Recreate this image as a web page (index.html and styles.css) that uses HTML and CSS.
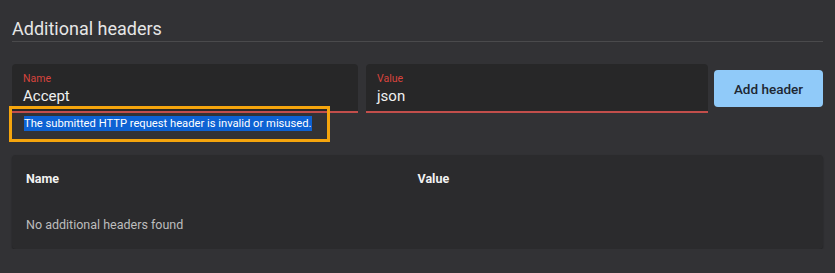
FILE: index.html
```html
<!DOCTYPE html>
<html>
<head>
<meta charset="utf-8">
<link rel="stylesheet" href="styles.css">
</head>
<body>
<section class="panel">
  <h2 class="title">Additional headers</h2>
  <div class="form-row">
    <div class="field-col">
      <div class="field error">
        <label class="field-label">Name</label>
        <div class="field-value">Accept</div>
      </div>
      <div class="helper"><span class="selected">The submitted HTTP request header is invalid or misused.</span></div>
      <div class="annotation"></div>
    </div>
    <div class="field-col">
      <div class="field error">
        <label class="field-label">Value</label>
        <div class="field-value">json</div>
      </div>
    </div>
    <button class="add-btn">Add header</button>
  </div>
  <div class="card">
    <div class="table-row head">
      <div class="cell">Name</div>
      <div class="cell">Value</div>
    </div>
    <div class="table-row empty">
      <div class="cell">No additional headers found</div>
    </div>
  </div>
</section>
</body>
</html>
```

FILE: styles.css
```css
html, body {
  margin: 0;
  padding: 0;
  background: #323235;
  font-family: Roboto, "Noto Sans", Arial, sans-serif;
}
.panel {
  padding: 17px 12px 0 12px;
}
.title {
  margin: 0;
  font-size: 18px;
  line-height: 24px;
  font-weight: 400;
  color: #e6e6e6;
  border-bottom: 1px solid #4a4a4c;
}
.form-row {
  display: grid;
  grid-template-columns: 346px 342px 109px;
  column-gap: 8px;
  align-items: start;
  margin-top: 22px;
}
.form-row .add-btn {
  margin-left: -2px;
}
.field-col {
  position: relative;
}
.field {
  background: #272728;
  border-radius: 4px 4px 0 0;
  height: 49px;
  padding: 0 11px;
  box-sizing: border-box;
  border-bottom: 2px solid #c24e4b;
  display: flex;
  flex-direction: column;
}
.field-label {
  margin-top: 9px;
  font-size: 10.5px;
  line-height: 12px;
  color: #d8443d;
}
.field-value {
  margin-top: 2px;
  font-size: 15px;
  line-height: 18px;
  color: #f0f0f0;
}
.helper {
  margin-top: 2px;
  padding-left: 12px;
  font-size: 11.2px;
  line-height: 18px;
  height: 18px;
}
.selected {
  background: #0d62d3;
  color: #ffffff;
  padding: 1px 0;
}
.annotation {
  position: absolute;
  left: -3px;
  top: 42px;
  width: 321px;
  height: 36px;
  box-sizing: border-box;
  border: 3px solid #f5a50d;
  pointer-events: none;
}
.add-btn {
  width: 109px;
  height: 37px;
  margin-top: 6px;
  border: none;
  border-radius: 4px;
  background: #90caf9;
  color: #1d2733;
  font-family: Roboto, "Noto Sans", Arial, sans-serif;
  font-size: 13.5px;
  font-weight: 500;
  padding: 0;
}
.card {
  margin-top: 22px;
  background: #2b2b2d;
  border-radius: 4px;
  box-shadow: 0 1px 2px rgba(0,0,0,0.35);
  padding: 14px 14px 14px 14px;
}
.table-row {
  display: grid;
  grid-template-columns: 1fr 1fr;
  line-height: 20px;
  font-size: 12.5px;
}
.table-row.head {
  font-weight: 700;
  color: #f2f2f2;
}
.table-row.empty {
  margin-top: 26px;
  color: #bdbdbd;
}
```
